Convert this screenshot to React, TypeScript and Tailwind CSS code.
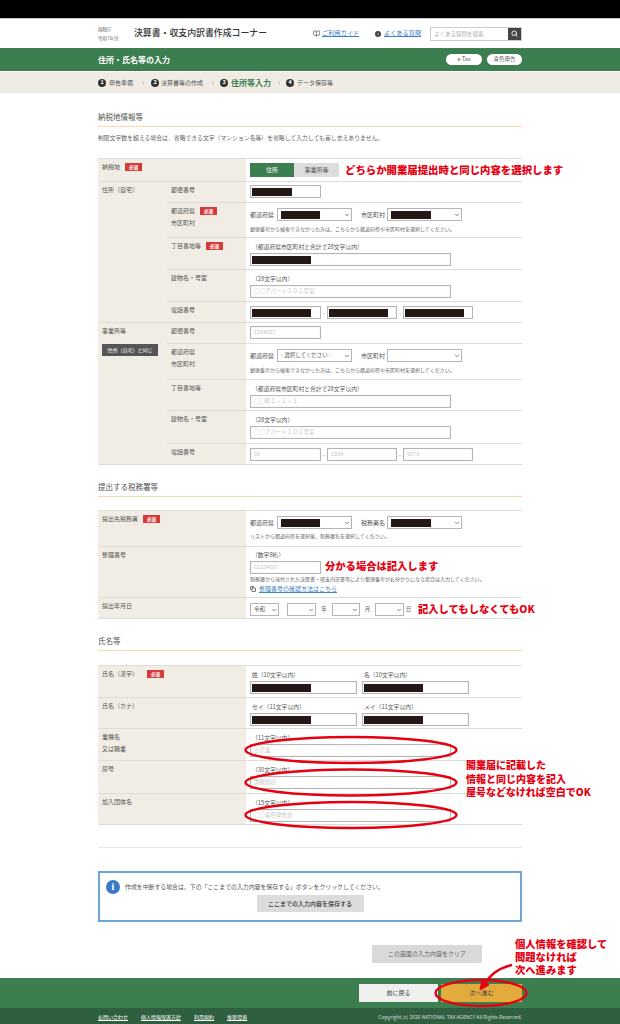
import type { ReactNode } from 'react'
import { BookOpen, ChevronDown, ChevronRight, Copy, Search } from 'lucide-react'

function Req() {
  return (
    <span className="inline-flex h-[8px] w-[17px] items-center justify-center bg-[#d63a3a] text-[4.5px] leading-none font-bold text-white">
      必須
    </span>
  )
}

function Redact({ w }: { w: string }) {
  return <span className={`block h-[8px] bg-[#231815] ${w}`} />
}

// plain text box, either redacted or showing a placeholder
function Box({ w, hide, ph }: { w: string; hide?: string; ph?: string }) {
  return (
    <div className={`flex h-[13px] shrink-0 items-center border border-[#b5b5b5] bg-white pl-[1px] shadow-[inset_0_0_1px_#bbb] ${w}`}>
      {hide && <Redact w={hide} />}
      {ph && <span className="pl-[2px] text-[5.5px] leading-none text-[#c4c4c4]">{ph}</span>}
    </div>
  )
}

function Select({ w, hide, text }: { w: string; hide?: string; text?: string }) {
  return (
    <div className={`flex h-[13px] shrink-0 items-center justify-between border border-[#b5b5b5] bg-white pr-[1px] pl-[3px] ${w}`}>
      {hide ? <Redact w={hide} /> : <span className="text-[5.5px] leading-none text-[#555]">{text}</span>}
      <ChevronDown size={6} strokeWidth={3} className="text-[#555]" />
    </div>
  )
}

function Label({ children, className = '' }: { children: ReactNode; className?: string }) {
  return <div className={`text-[6px] leading-[11.5px] text-[#555] ${className}`}>{children}</div>
}

function Small({ children, className = '' }: { children: ReactNode; className?: string }) {
  return <div className={`text-[5px] leading-[8px] text-[#666] ${className}`}>{children}</div>
}

function Caption({ children }: { children: ReactNode }) {
  return <div className="mb-[3px] h-[7px] pl-[2px] text-[5.8px] leading-[7px] text-[#555]">{children}</div>
}

function Row({ h, label, children }: { h: string; label: ReactNode; children: ReactNode }) {
  return (
    <div className={`flex border-b border-[#ddd] ${h}`}>
      <div className="w-[79px] shrink-0 bg-[#f1ede4] pt-[2px] pl-[4px]">{label}</div>
      <div className="flex-1 bg-white pl-[4px]">{children}</div>
    </div>
  )
}

function WideRow({ h, label, children }: { h: string; label: ReactNode; children: ReactNode }) {
  return (
    <div className={`flex border-b border-[#ddd] ${h}`}>
      <div className="w-[148px] shrink-0 bg-[#f1ede4] pt-[2px] pl-[4px]">{label}</div>
      <div className="flex-1 bg-white pl-[4px]">{children}</div>
    </div>
  )
}

function SectionHead({ title, className = '' }: { title: string; className?: string }) {
  return (
    <div className={`h-[18px] border-b border-[#f5dcae] text-[7.5px] leading-[16px] text-[#555] ${className}`}>{title}</div>
  )
}

function AddressRows({ filled }: { filled: boolean }) {
  return (
    <>
      <Row h="h-[21px]" label={<Label>郵便番号</Label>}>
        <div className="pt-[3px]">
          {filled ? <Box w="w-[71px]" hide="w-[40px]" /> : <Box w="w-[71px]" ph="1234567" />}
        </div>
      </Row>
      <Row
        h={filled ? 'h-[35px]' : 'h-[36px]'}
        label={
          <>
            <Label className="flex items-center gap-[5px]">
              都道府県{filled && <Req />}
            </Label>
            <Label>市区町村</Label>
          </>
        }
      >
        <div className="flex items-center pt-[5px]">
          <span className="w-[27px] text-[6px] leading-none text-[#555]">都道府県</span>
          <Select w="w-[75px]" hide={filled ? 'w-[39px]' : undefined} text="- 選択してください -" />
          <span className="ml-[9px] w-[26px] text-[6px] leading-none text-[#555]">市区町村</span>
          <Select w="w-[75px]" hide={filled ? 'w-[40px]' : undefined} />
        </div>
        <Small className="mt-[4px]">郵便番号から検索できなかった方は、こちらから都道府県や市区町村を選択してください。</Small>
      </Row>
      <Row
        h={filled ? 'h-[32px]' : 'h-[31px]'}
        label={
          <Label className="flex items-center gap-[5px]">
            丁目番地等{filled && <Req />}
          </Label>
        }
      >
        <div className="pt-[5px]">
          <Caption>（都道府県市区町村と合計で28文字以内）</Caption>
          {filled ? <Box w="w-[201px]" hide="w-[59px]" /> : <Box w="w-[201px]" ph="○○町１－１－１" />}
        </div>
      </Row>
      <Row h={filled ? 'h-[32px]' : 'h-[33px]'} label={<Label>建物名・号室</Label>}>
        <div className="pt-[5px]">
          <Caption>（28文字以内）</Caption>
          <Box w="w-[201px]" ph="○○アパート１０１号室" />
        </div>
      </Row>
      <Row h="h-[21px]" label={<Label>電話番号</Label>}>
        <div className="flex items-center pt-[4px] text-[6px] leading-none text-[#777]">
          {filled ? <Box w="w-[71px]" hide="w-[59px]" /> : <Box w="w-[71px]" ph="03" />}
          <span className="w-[6px] text-center">-</span>
          {filled ? <Box w="w-[70px]" hide="w-[59px]" /> : <Box w="w-[70px]" ph="1234" />}
          <span className="w-[6px] text-center">-</span>
          {filled ? <Box w="w-[70px]" hide="w-[59px]" /> : <Box w="w-[70px]" ph="5678" />}
        </div>
      </Row>
    </>
  )
}

function NameInputs({ first, second }: { first: string; second: string }) {
  return (
    <div className="flex gap-[5px] pt-[5px]">
      <div>
        <Caption>{first}</Caption>
        <Box w="w-[107px]" hide="w-[59px]" />
      </div>
      <div>
        <Caption>{second}</Caption>
        <Box w="w-[107px]" hide="w-[59px]" />
      </div>
    </div>
  )
}

function OneInput({ cap, ph }: { cap: string; ph: string }) {
  return (
    <div className="pt-[5px]">
      <Caption>{cap}</Caption>
      <Box w="w-[201px]" ph={ph} />
    </div>
  )
}

const note = 'absolute font-black text-[#e60012] whitespace-nowrap'

export default function App() {
  return (
    <div className="relative flex h-[1024px] w-[620px] flex-col overflow-hidden bg-white font-['Noto_Sans_CJK_JP','Noto_Sans',sans-serif]">
      <div className="h-[19px] shrink-0 border-b border-[#ccc] bg-black" />

      {/* site header */}
      <header className="flex h-[29px] shrink-0 items-center pr-[98px] pl-[98px]">
        <div className="w-[36px] text-[4.5px] leading-[9px] text-[#666]">
          <div>国税庁</div>
          <div>令和7年分</div>
        </div>
        <div className="w-[179px] text-[8.9px] leading-none font-medium text-[#333]">決算書・収支内訳書作成コーナー</div>
        <BookOpen size={7} className="text-[#444]" />
        <a className="ml-[2px] w-[53px] text-[6.2px] leading-none text-[#3b7fc4] underline">ご利用ガイド</a>
        <span className="flex h-[6px] w-[6px] items-center justify-center rounded-full bg-[#444] text-[4px] leading-none text-white">?</span>
        <a className="ml-[3px] w-[46px] text-[6.2px] leading-none text-[#3b7fc4] underline">よくある質問</a>
        <div className="flex h-[14px] flex-1 border border-[#ccc]">
          <span className="flex-1 pl-[3px] text-[5.5px] leading-[12px] text-[#aaa]">よくある質問を検索</span>
          <span className="flex w-[13px] items-center justify-center bg-[#444]">
            <Search size={7} strokeWidth={3} className="text-white" />
          </span>
        </div>
      </header>

      <div className="flex h-[23px] shrink-0 items-center justify-between bg-[#3c7e50] px-[98px]">
        <div className="text-[8px] leading-none font-bold text-white">住所・氏名等の入力</div>
        <div className="flex gap-[5px]">
          <span className="flex h-[11px] w-[36px] items-center justify-center rounded-full bg-white text-[5.5px] leading-none text-[#555]">e-Tax</span>
          <span className="flex h-[11px] w-[35px] items-center justify-center rounded-full bg-white text-[5.5px] leading-none text-[#555]">青色申告</span>
        </div>
      </div>

      {/* steps */}
      <div className="mt-[1px] flex h-[21px] shrink-0 items-center bg-[#f0ece3] pl-[98px] text-[6px] leading-none text-[#555]">
        <Step n="1" />
        <span className="ml-[3px] w-[25px]">申告準備</span>
        <ChevronRight size={6} className="mx-[5.5px] text-[#888]" />
        <Step n="2" />
        <span className="ml-[2px] w-[44px]">決算書等の作成</span>
        <ChevronRight size={6} className="mx-[4.5px] text-[#888]" />
        <Step n="3" />
        <span className="ml-[3px] w-[40px] text-[8px] font-bold text-[#3c7e50]">住所等入力</span>
        <ChevronRight size={6} className="mx-[4.5px] text-[#888]" />
        <Step n="4" />
        <span className="ml-[3px]">データ保存等</span>
      </div>

      <main className="flex flex-1 flex-col px-[98px]">
        <SectionHead title="納税地情報等" className="mt-[16px]" />
        <p className="mt-[6px] h-[10px] text-[5.85px] leading-[10px] whitespace-nowrap text-[#666]">
          制限文字数を超える場合は、省略できる文字（マンション名等）を省略して入力しても差し支えありません。
        </p>

        <div className="mt-[15px] border-t border-[#ddd]">
          <WideRow
            h="h-[23px]"
            label={
              <Label className="flex items-center gap-[5px]">
                納税地 <Req />
              </Label>
            }
          >
            <div className="flex pt-[4px]">
              <span className="flex h-[14px] w-[44px] items-center justify-center bg-[#3c7e50] text-[6px] leading-none text-white">住所</span>
              <span className="flex h-[14px] w-[45px] items-center justify-center bg-[#ddd] text-[6px] leading-none text-[#555]">事業所等</span>
            </div>
          </WideRow>
          <div className="flex">
            <div className="w-[69px] shrink-0 border-b border-[#ddd] bg-[#f1ede4] pt-[2px] pl-[4px]">
              <Label>住所（自宅）</Label>
            </div>
            <div className="flex-1">
              <AddressRows filled />
            </div>
          </div>
          <div className="flex">
            <div className="w-[69px] shrink-0 border-b border-[#ddd] bg-[#f1ede4] pt-[2px] pl-[4px]">
              <Label>事業所等</Label>
              <button className="mt-[7px] flex h-[12px] w-[56px] items-center justify-center bg-[#555] text-[5px] leading-none whitespace-nowrap text-white">
                住所（自宅）と同じ
              </button>
            </div>
            <div className="flex-1">
              <AddressRows filled={false} />
            </div>
          </div>
        </div>

        <SectionHead title="提出する税務署等" className="mt-[14px]" />
        <div className="mt-[13px] border-t border-[#ddd]">
          <WideRow
            h="h-[36px]"
            label={
              <Label className="flex items-center gap-[5px]">
                提出先税務署 <Req />
              </Label>
            }
          >
            <div className="flex items-center pt-[5px]">
              <span className="w-[27px] text-[6px] leading-none text-[#555]">都道府県</span>
              <Select w="w-[75px]" hide="w-[39px]" />
              <span className="ml-[9px] w-[26px] text-[6px] leading-none text-[#555]">税務署名</span>
              <Select w="w-[75px]" hide="w-[40px]" />
            </div>
            <Small className="mt-[3px]">リストから都道府県を選択後、税務署名を選択してください。</Small>
          </WideRow>
          <WideRow h="h-[51px]" label={<Label>整理番号</Label>}>
            <div className="pt-[4px]">
              <Caption>（数字8桁）</Caption>
              <Box w="w-[71px]" ph="01234567" />
              <Small className="mt-[1px]">税務署から送付された決算書・収支内訳書等により整理番号がお分かりになる場合は入力してください。</Small>
              <div className="mt-[2px] flex items-center gap-[3px]">
                <Copy size={6} strokeWidth={3} className="text-[#444]" />
                <a className="text-[6px] leading-[8px] text-[#3b86c4] underline">整理番号の確認方法はこちら</a>
              </div>
            </div>
          </WideRow>
          <WideRow h="h-[21px]" label={<Label>提出年月日</Label>}>
            <div className="flex items-center pt-[5px] text-[5.5px] leading-none text-[#666]">
              <Select w="w-[29px]" text="令和" />
              <Select w="ml-[8px] w-[29px]" />
              <span className="w-[16px] text-center">年</span>
              <Select w="w-[28px]" />
              <span className="w-[15px] text-center">月</span>
              <Select w="w-[29px]" />
              <span className="w-[9px] text-center">日</span>
            </div>
          </WideRow>
        </div>

        <SectionHead title="氏名等" className="mt-[14px]" />
        <div className="mt-[14px] border-t border-[#ddd]">
          <WideRow
            h="h-[32px]"
            label={
              <Label className="flex items-center gap-[9px]">
                氏名（漢字） <Req />
              </Label>
            }
          >
            <NameInputs first="姓（10文字以内）" second="名（10文字以内）" />
          </WideRow>
          <WideRow h="h-[31px]" label={<Label>氏名（カナ）</Label>}>
            <NameInputs first="セイ（11文字以内）" second="メイ（11文字以内）" />
          </WideRow>
          <WideRow
            h="h-[32px]"
            label={
              <Label>
                業種名
                <br />
                又は職業
              </Label>
            }
          >
            <OneInput cap="（11文字以内）" ph="小売業" />
          </WideRow>
          <WideRow h="h-[33px]" label={<Label>屋号</Label>}>
            <OneInput cap="（30文字以内）" ph="国税商店" />
          </WideRow>
          <WideRow h="h-[31px]" label={<Label>加入団体名</Label>}>
            <OneInput cap="（15文字以内）" ph="○○青色申告会" />
          </WideRow>
        </div>

        <hr className="mt-[22px] border-[#e8e8e8]" />

        <div className="mt-[23px] flex h-[51px] flex-col border-2 border-[#6ea5d8] px-[6px] pt-[7px]">
          <div className="flex items-center gap-[5px]">
            <span className="flex h-[14px] w-[14px] items-center justify-center rounded-full bg-[#3a7cc4] font-['Liberation_Serif',serif] text-[10px] leading-none font-bold text-white">i</span>
            <span className="text-[5.9px] leading-none whitespace-nowrap text-[#555]">
              作成を中断する場合は、下の「ここまでの入力内容を保存する」ボタンをクリックしてください。
            </span>
          </div>
          <button className="mx-auto mt-[1px] flex h-[17px] w-[107px] items-center justify-center bg-[#dcdcdc] text-[6px] leading-none font-medium text-[#333]">
            ここまでの入力内容を保存する
          </button>
        </div>

        <div className="mt-[23px] flex justify-end pr-[40px]">
          <button className="flex h-[18px] w-[110px] items-center justify-center bg-[#d9d9d9] text-[6px] leading-none text-[#666]">
            この画面の入力内容をクリア
          </button>
        </div>
      </main>

      <div className="flex h-[30px] shrink-0 justify-end gap-[3px] bg-[#3c7e50] pt-[6px] pr-[98px]">
        <button className="flex h-[18px] w-[79px] items-center justify-center bg-[#efefef] text-[6px] leading-none text-[#444]">前に戻る</button>
        <button className="flex h-[18px] w-[81px] items-center justify-center bg-[#e3aa3c] text-[6px] leading-none text-[#444]">次へ進む</button>
      </div>
      <footer className="flex h-[16px] shrink-0 items-center justify-between bg-[#2e5f3e] px-[98px] text-[5px] leading-none text-white">
        <div className="flex gap-[13px] underline">
          <a>お問い合わせ</a>
          <a>個人情報保護方針</a>
          <a>利用規約</a>
          <a>推奨環境</a>
        </div>
        <span className="text-[#ddd]">Copyright (c) 2026 NATIONAL TAX AGENCY All Rights Reserved.</span>
      </footer>

      {/* red notes added on top of the screenshot */}
      <div className={`${note} top-[163px] left-[345px] text-[10.4px] leading-[14px]`}>どちらか開業届提出時と同じ内容を選択します</div>
      <div className={`${note} top-[559px] left-[325px] text-[10.3px] leading-[14px]`}>分かる場合は記入します</div>
      <div className={`${note} top-[602px] left-[418px] text-[10.3px] leading-[14px]`}>記入してもしなくてもOK</div>
      <div className={`${note} top-[758px] left-[466px] text-[10px] leading-[13.5px]`}>
        開業届に記載した
        <br />
        情報と同じ内容を記入
        <br />
        屋号などなければ空白でOK
      </div>
      <div className={`${note} top-[937px] left-[515px] text-[10.3px] leading-[13px]`}>
        個人情報を確認して
        <br />
        問題なければ
        <br />
        次へ進みます
      </div>

      <svg className="absolute top-0 left-0" width="620" height="1024" fill="none" stroke="#e60012" strokeWidth="2.4">
        <ellipse cx="351" cy="750" rx="105.5" ry="13" />
        <ellipse cx="351" cy="782.5" rx="105.5" ry="13" />
        <ellipse cx="351" cy="815" rx="105.5" ry="13" />
        <ellipse cx="481" cy="993" rx="45.5" ry="13" />
        <path d="M512 965 C 498 968 489 976 484 985" strokeWidth="2.6" />
        <path d="M480 990 L482 980 L489 985 Z" fill="#e60012" strokeWidth="1" />
      </svg>
    </div>
  )
}

function Step({ n }: { n: string }) {
  return (
    <span className="flex h-[8px] w-[8px] shrink-0 items-center justify-center rounded-full bg-[#333] text-[5.5px] leading-none font-bold text-white">
      {n}
    </span>
  )
}
